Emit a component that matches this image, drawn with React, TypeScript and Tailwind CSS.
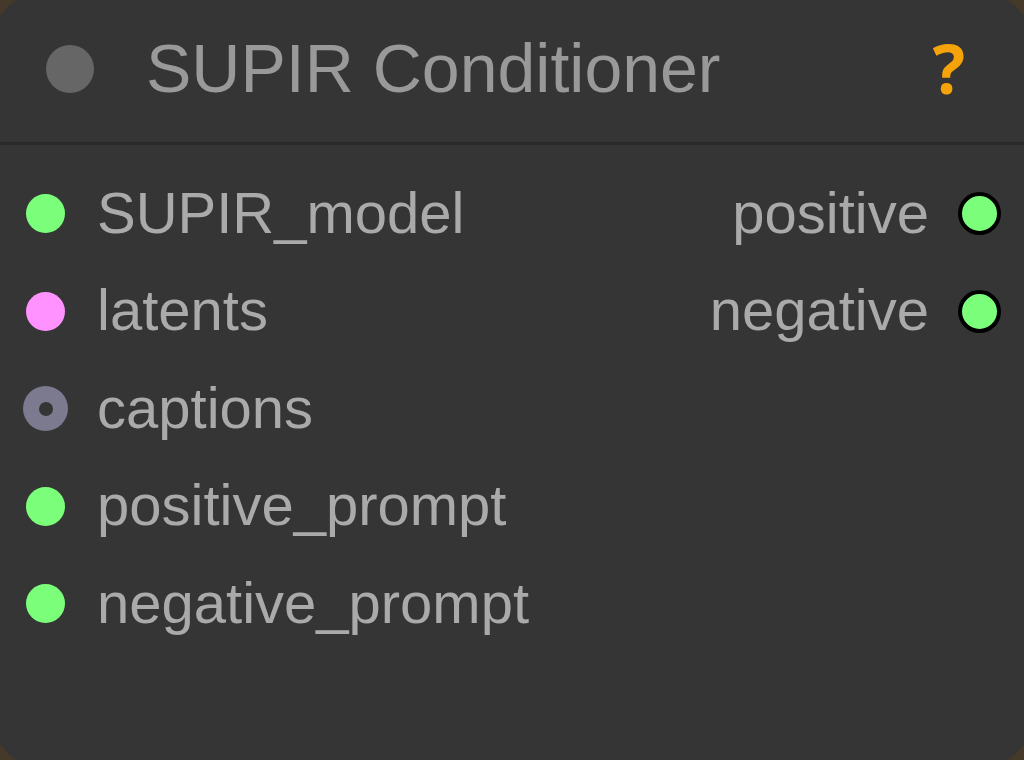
import React from "react";

type Slot = { name: string; kind: "green" | "pink" | "ring" };

const inputs: Slot[] = [
  { name: "SUPIR_model", kind: "green" },
  { name: "latents", kind: "pink" },
  { name: "captions", kind: "ring" },
  { name: "positive_prompt", kind: "green" },
  { name: "negative_prompt", kind: "green" },
];

const outputs = ["positive", "negative"];

function InputDot({ kind }: { kind: Slot["kind"] }) {
  if (kind === "ring") {
    return (
      <div className="w-[45px] h-[45px] -mx-[3px] rounded-full bg-[#7b7a8f] flex items-center justify-center">
        <div className="w-[14px] h-[14px] rounded-full bg-[#343434]" />
      </div>
    );
  }
  return (
    <div
      className={
        kind === "green"
          ? "w-[39px] h-[39px] rounded-full bg-[#7bff7b]"
          : "w-[39px] h-[39px] rounded-full bg-[#ff92ff]"
      }
    />
  );
}

export default function App() {
  return (
    <div className="w-[1024px] h-[760px] overflow-hidden bg-[#45392a]">
      <div
        className="-mx-[5px] -mt-[5px] h-[770px] rounded-[42px] bg-[#353535] flex flex-col"
        style={{ fontFamily: '"Liberation Sans", Arial, sans-serif' }}
      >
        <div className="h-[150px] shrink-0 flex items-center border-b-[3px] border-[#2a2a2a] pl-[51px] pr-[64px]">
          <div className="w-[48px] h-[48px] rounded-full bg-[#666666] shrink-0" />
          <div className="ml-[52px] text-[68px] leading-none text-[#999999] flex-1 -mt-[1px]">
            SUPIR Conditioner
          </div>
          <div
            className="text-[68px] leading-none font-bold text-[#f5a30a] -mt-[2px]"
            style={{ fontFamily: '"Noto Sans", sans-serif' }}
          >
            ?
          </div>
        </div>
        <div className="pt-[20px] flex flex-col">
          {inputs.map((inp, i) => (
            <div key={inp.name} className="h-[97.5px] flex items-center justify-between pl-[31px] pr-[28px]">
              <div className="flex items-center">
                <InputDot kind={inp.kind} />
                <span className="ml-[32px] text-[58px] leading-none text-[#aaaaaa] -mt-[2px]">{inp.name}</span>
              </div>
              {outputs[i] && (
                <div className="flex items-center">
                  <span className="mr-[29px] text-[58px] leading-none text-[#aaaaaa] -mt-[2px]">{outputs[i]}</span>
                  <div className="w-[43px] h-[43px] rounded-full bg-[#7bff7b] border-[4px] border-black" />
                </div>
              )}
            </div>
          ))}
        </div>
      </div>
    </div>
  );
}
